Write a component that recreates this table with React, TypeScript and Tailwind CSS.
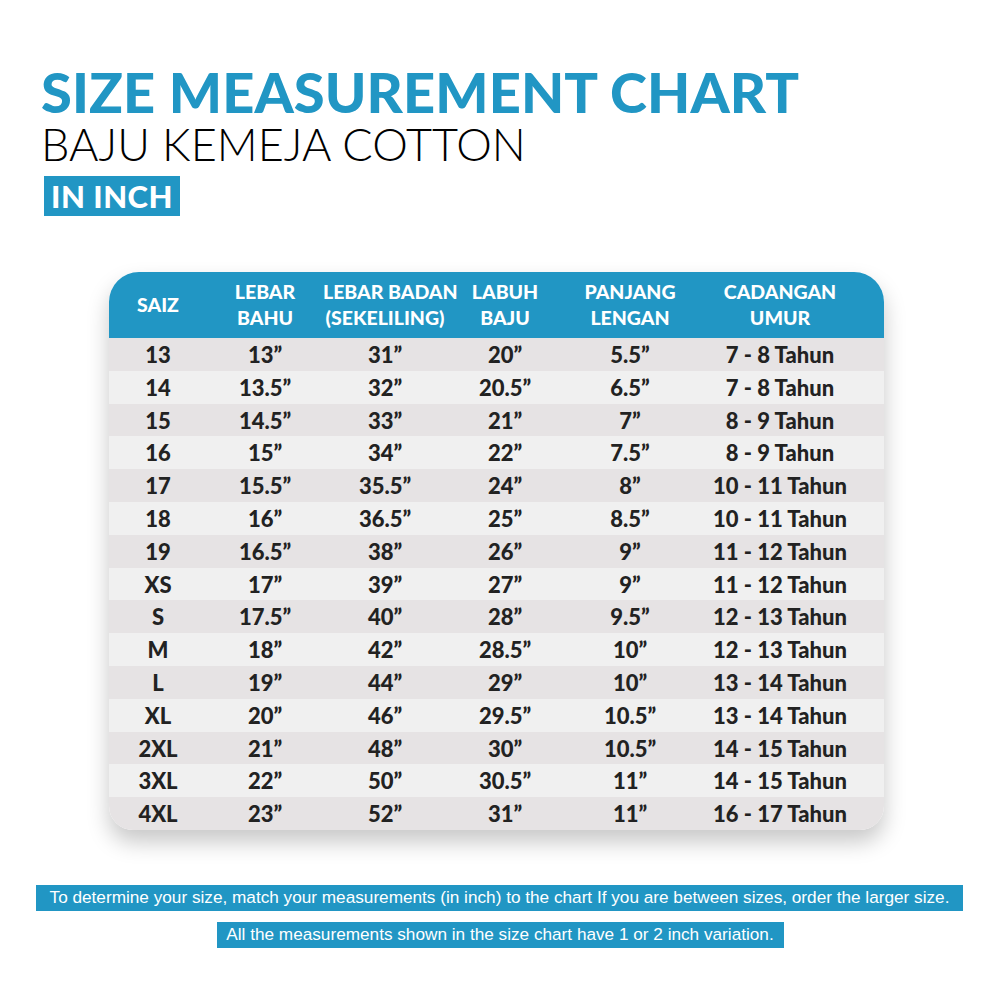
import React from 'react';

const rows = [
  ['13', '13”', '31”', '20”', '5.5”', '7 - 8 Tahun'],
  ['14', '13.5”', '32”', '20.5”', '6.5”', '7 - 8 Tahun'],
  ['15', '14.5”', '33”', '21”', '7”', '8 - 9 Tahun'],
  ['16', '15”', '34”', '22”', '7.5”', '8 - 9 Tahun'],
  ['17', '15.5”', '35.5”', '24”', '8”', '10 - 11 Tahun'],
  ['18', '16”', '36.5”', '25”', '8.5”', '10 - 11 Tahun'],
  ['19', '16.5”', '38”', '26”', '9”', '11 - 12 Tahun'],
  ['XS', '17”', '39”', '27”', '9”', '11 - 12 Tahun'],
  ['S', '17.5”', '40”', '28”', '9.5”', '12 - 13 Tahun'],
  ['M', '18”', '42”', '28.5”', '10”', '12 - 13 Tahun'],
  ['L', '19”', '44”', '29”', '10”', '13 - 14 Tahun'],
  ['XL', '20”', '46”', '29.5”', '10.5”', '13 - 14 Tahun'],
  ['2XL', '21”', '48”', '30”', '10.5”', '14 - 15 Tahun'],
  ['3XL', '22”', '50”', '30.5”', '11”', '14 - 15 Tahun'],
  ['4XL', '23”', '52”', '31”', '11”', '16 - 17 Tahun'],
];

const headers = [
  ['SAIZ'],
  ['LEBAR', 'BAHU'],
  ['LEBAR BADAN', '(SEKELILING)'],
  ['LABUH', 'BAJU'],
  ['PANJANG', 'LENGAN'],
  ['CADANGAN', 'UMUR'],
];

// column widths, total 775
const cols = 'grid grid-cols-[98px_116px_124px_116px_134px_166px_21px]';

export default function App() {
  return (
    <div className="w-[1000px] h-[1000px] bg-white font-['Lato',sans-serif] flex flex-col">
      <div className="pl-[41px] pt-[64px]">
        <h1 className="text-[56px] leading-[56px] font-black text-[#2196c4] tracking-[0.1px]">
          SIZE MEASUREMENT CHART
        </h1>
        <h2 className="text-[45px] leading-[48px] font-light text-black">
          BAJU KEMEJA COTTON
        </h2>
        <div className="mt-[8px] ml-[3px] inline-block bg-[#2196c4] text-white font-black text-[31px] leading-[40px] px-[7px] h-[40px] tracking-[0.5px]">
          IN INCH
        </div>
      </div>

      <div className="ml-[109px] mt-[56px] w-[775px] rounded-t-[30px] rounded-b-[24px] overflow-hidden shadow-[0_12px_22px_rgba(0,0,0,0.22)]">
        <div className={`${cols} bg-[#2196c4] h-[66px] items-center text-white font-black text-[19.5px] leading-[26px] text-center`}>
          {headers.map((h, i) => (
            <div key={i}>
              {h.map((l) => (
                <div key={l} className="whitespace-nowrap">{l}</div>
              ))}
            </div>
          ))}
        </div>
        {rows.map((r, i) => (
          <div
            key={i}
            className={`${cols} h-[32.8px] items-center text-[22px] font-black text-[#222] text-center ${
              i % 2 === 0 ? 'bg-[#e6e3e4]' : 'bg-[#f0f0f0]'
            }`}
          >
            {r.map((c, j) => (
              <div key={j} className="whitespace-nowrap">{c}</div>
            ))}
          </div>
        ))}
      </div>

      <div className="flex flex-col items-center mt-[55px] font-['Liberation_Sans',sans-serif] text-white text-[17.2px]">
        <div className="w-[927px] h-[26px] bg-[#2196c4] flex items-center justify-center -ml-[1px]">
          To determine your size, match your measurements (in inch) to the chart If you are between sizes, order the larger size.
        </div>
        <div className="w-[567px] h-[26px] bg-[#2196c4] flex items-center justify-center mt-[11px]">
          All the measurements shown in the size chart have 1 or 2 inch variation.
        </div>
      </div>
    </div>
  );
}
